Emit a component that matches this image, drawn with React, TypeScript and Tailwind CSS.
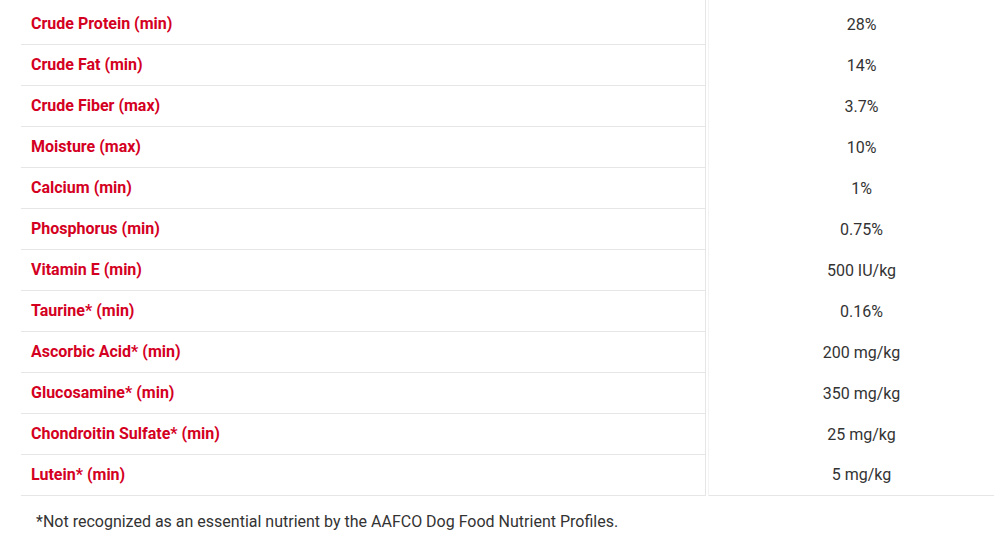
const rows: [string, string][] = [
  ["Crude Protein (min)", "28%"],
  ["Crude Fat (min)", "14%"],
  ["Crude Fiber (max)", "3.7%"],
  ["Moisture (max)", "10%"],
  ["Calcium (min)", "1%"],
  ["Phosphorus (min)", "0.75%"],
  ["Vitamin E (min)", "500 IU/kg"],
  ["Taurine* (min)", "0.16%"],
  ["Ascorbic Acid* (min)", "200 mg/kg"],
  ["Glucosamine* (min)", "350 mg/kg"],
  ["Chondroitin Sulfate* (min)", "25 mg/kg"],
  ["Lutein* (min)", "5 mg/kg"],
];

export default function App() {
  return (
    <div className="w-[994px] h-[553px] bg-white overflow-hidden font-['Roboto',sans-serif]">
      <div className="pl-[21px]">
        {rows.map(([label, value], i) => {
          const last = i === rows.length - 1;
          return (
            <div key={label} className="flex">
              <div
                className={`w-[685px] shrink-0 border-r border-b border-[#e6e6e6] pl-[10px] flex items-center text-[16px] font-bold text-[#d4001f] ${
                  i === 0 ? "h-[45px] pt-[4px]" : "h-[41px]"
                }`}
              >
                {label}
              </div>
              <div
                className={`flex-1 flex items-center justify-center pl-[20px] border-l border-[#f3f3f3] ml-[2px] text-[16px] text-[#333] ${
                  i === 0 ? "h-[45px] pt-[4px]" : "h-[41px]"
                } ${last ? "border-b border-b-[#e6e6e6]" : ""}`}
              >
                {value}
              </div>
            </div>
          );
        })}
        <p className="pl-[15px] pt-[14px] text-[16px] text-[#333]">
          *Not recognized as an essential nutrient by the AAFCO Dog Food Nutrient Profiles.
        </p>
      </div>
    </div>
  );
}
